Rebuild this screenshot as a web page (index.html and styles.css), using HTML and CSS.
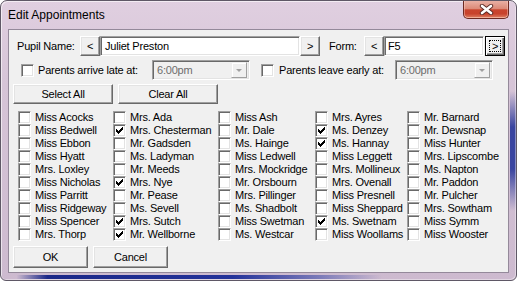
FILE: index.html
```html
<!DOCTYPE html>
<html lang="en">
<head>
  <meta charset="UTF-8">
  <title>Edit Appointments</title>
  <link rel="stylesheet" href="styles.css">
</head>
<body>
  <div class="window">
    <div class="titlebar">
      <span class="title">Edit Appointments</span>
      <span class="close">
        <svg width="15" height="11" viewBox="0 0 15 11">
          <path d="M3 2 L12 9 M12 2 L3 9" stroke="#5a2a24" stroke-width="4.4" stroke-linecap="round"/>
          <path d="M3 2 L12 9 M12 2 L3 9" stroke="#fff" stroke-width="2.6" stroke-linecap="round"/>
        </svg>
      </span>
    </div>

    <div class="client">
      <div class="row pupil">
        <span class="lbl name-lbl">Pupil Name:</span>
        <span class="btn nav">&lt;</span>
        <span class="edit name-edit">Juliet Preston</span>
        <span class="btn nav">&gt;</span>
        <span class="lbl form-lbl">Form:</span>
        <span class="btn nav">&lt;</span>
        <span class="edit form-edit">F5</span>
        <span class="btn nav focused"><span class="focus">&gt;</span></span>
      </div>

      <div class="row times">
        <span class="check"></span>
        <span class="lbl late-lbl">Parents arrive late at:</span>
        <span class="combo"><span class="combo-text">6:00pm</span><span class="drop"><span class="arrow"></span></span></span>
        <span class="check early-check"></span>
        <span class="lbl early-lbl">Parents leave early at:</span>
        <span class="combo"><span class="combo-text">6:00pm</span><span class="drop"><span class="arrow"></span></span></span>
      </div>

      <div class="row actions">
        <span class="btn wide">Select All</span>
        <span class="btn wide">Clear All</span>
      </div>

      <div class="staff">
        <label class="item"><span class="check"></span>Miss Acocks</label>
        <label class="item"><span class="check"></span>Mrs. Ada</label>
        <label class="item"><span class="check"></span>Miss Ash</label>
        <label class="item"><span class="check"></span>Mrs. Ayres</label>
        <label class="item"><span class="check"></span>Mr. Barnard</label>

        <label class="item"><span class="check"></span>Miss Bedwell</label>
        <label class="item"><span class="check"><svg class="tick" width="7" height="7" viewBox="0 0 7 7"><path d="M0 2h1v1h1v1h1v-1h1v-1h1v-1h1v-1h1v3h-1v1h-1v1h-1v1h-1v1h-1v-1h-1v-1h-1z"/></svg></span>Mrs. Chesterman</label>
        <label class="item"><span class="check"></span>Mr. Dale</label>
        <label class="item"><span class="check"><svg class="tick" width="7" height="7" viewBox="0 0 7 7"><path d="M0 2h1v1h1v1h1v-1h1v-1h1v-1h1v-1h1v3h-1v1h-1v1h-1v1h-1v1h-1v-1h-1v-1h-1z"/></svg></span>Ms. Denzey</label>
        <label class="item"><span class="check"></span>Mr. Dewsnap</label>

        <label class="item"><span class="check"></span>Miss Ebbon</label>
        <label class="item"><span class="check"></span>Mr. Gadsden</label>
        <label class="item"><span class="check"></span>Ms. Hainge</label>
        <label class="item"><span class="check"><svg class="tick" width="7" height="7" viewBox="0 0 7 7"><path d="M0 2h1v1h1v1h1v-1h1v-1h1v-1h1v-1h1v3h-1v1h-1v1h-1v1h-1v1h-1v-1h-1v-1h-1z"/></svg></span>Ms. Hannay</label>
        <label class="item"><span class="check"></span>Miss Hunter</label>

        <label class="item"><span class="check"></span>Miss Hyatt</label>
        <label class="item"><span class="check"></span>Ms. Ladyman</label>
        <label class="item"><span class="check"></span>Miss Ledwell</label>
        <label class="item"><span class="check"></span>Miss Leggett</label>
        <label class="item"><span class="check"></span>Mrs. Lipscombe</label>

        <label class="item"><span class="check"></span>Mrs. Loxley</label>
        <label class="item"><span class="check"></span>Mr. Meeds</label>
        <label class="item"><span class="check"></span>Mrs. Mockridge</label>
        <label class="item"><span class="check"></span>Mrs. Mollineux</label>
        <label class="item"><span class="check"></span>Ms. Napton</label>

        <label class="item"><span class="check"></span>Miss Nicholas</label>
        <label class="item"><span class="check"><svg class="tick" width="7" height="7" viewBox="0 0 7 7"><path d="M0 2h1v1h1v1h1v-1h1v-1h1v-1h1v-1h1v3h-1v1h-1v1h-1v1h-1v1h-1v-1h-1v-1h-1z"/></svg></span>Mrs. Nye</label>
        <label class="item"><span class="check"></span>Mr. Orsbourn</label>
        <label class="item"><span class="check"></span>Mrs. Ovenall</label>
        <label class="item"><span class="check"></span>Mr. Paddon</label>

        <label class="item"><span class="check"></span>Miss Parritt</label>
        <label class="item"><span class="check"></span>Mr. Pease</label>
        <label class="item"><span class="check"></span>Mrs. Pillinger</label>
        <label class="item"><span class="check"></span>Miss Presnell</label>
        <label class="item"><span class="check"></span>Mr. Pulcher</label>

        <label class="item"><span class="check"></span>Miss Ridgeway</label>
        <label class="item"><span class="check"></span>Ms. Sevell</label>
        <label class="item"><span class="check"></span>Ms. Shadbolt</label>
        <label class="item"><span class="check"></span>Miss Sheppard</label>
        <label class="item"><span class="check"></span>Mrs. Sowtham</label>

        <label class="item"><span class="check"></span>Miss Spencer</label>
        <label class="item"><span class="check"><svg class="tick" width="7" height="7" viewBox="0 0 7 7"><path d="M0 2h1v1h1v1h1v-1h1v-1h1v-1h1v-1h1v3h-1v1h-1v1h-1v1h-1v1h-1v-1h-1v-1h-1z"/></svg></span>Mrs. Sutch</label>
        <label class="item"><span class="check"></span>Miss Swetman</label>
        <label class="item"><span class="check"><svg class="tick" width="7" height="7" viewBox="0 0 7 7"><path d="M0 2h1v1h1v1h1v-1h1v-1h1v-1h1v-1h1v3h-1v1h-1v1h-1v1h-1v1h-1v-1h-1v-1h-1z"/></svg></span>Ms. Swetnam</label>
        <label class="item"><span class="check"></span>Miss Symm</label>

        <label class="item"><span class="check"></span>Mrs. Thorp</label>
        <label class="item"><span class="check"><svg class="tick" width="7" height="7" viewBox="0 0 7 7"><path d="M0 2h1v1h1v1h1v-1h1v-1h1v-1h1v-1h1v3h-1v1h-1v1h-1v1h-1v1h-1v-1h-1v-1h-1z"/></svg></span>Mr. Wellborne</label>
        <label class="item"><span class="check"></span>Ms. Westcar</label>
        <label class="item"><span class="check"></span>Miss Woollams</label>
        <label class="item"><span class="check"></span>Miss Wooster</label>
      </div>

      <div class="row footer">
        <span class="btn small">OK</span>
        <span class="btn small">Cancel</span>
      </div>
    </div>
  </div>
</body>
</html>
```

FILE: styles.css
```css
body {
  margin: 0;
  font-family: "Liberation Sans", Arial, sans-serif;
  font-size: 11px;
  letter-spacing: -0.2px;
  color: #000;
  background: #fff;
}

/* window frame */
.window {
  width: 517px;
  height: 281px;
  box-sizing: border-box;
  padding: 0 7px 7px;
  border: 1px solid #5f5866;
  border-radius: 7px 7px 6px 6px;
  display: flex;
  flex-direction: column;
  background:
    linear-gradient(to right, rgba(30,40,140,0) 3%, #1b2888 9%, #24329a 45%, rgba(70,80,170,0.6) 62%, rgba(200,180,210,0) 74%) left bottom 1px / 100% 4px no-repeat,
    linear-gradient(rgba(60,70,170,0), #3a45a0 30%, #3a45a0 65%, rgba(60,70,170,0)) right 0 top 90px / 6px 120px no-repeat,
    linear-gradient(#e0cfe0, #d6c4d7 30%, #cdbacf);
  box-shadow: inset 1px 1px rgba(255,255,255,0.6), inset -1px -1px rgba(255,255,255,0.4);
}
.titlebar {
  display: flex;
  height: 28px;
  flex: none;
}
.title {
  font-size: 12px;
  letter-spacing: 0;
  line-height: 15px;
  padding-top: 7px;
}
.close {
  margin-left: auto;
  width: 46px;
  height: 18px;
  box-sizing: border-box;
  display: flex;
  align-items: center;
  justify-content: center;
  border: 1px solid #6d2a22;
  border-top: none;
  border-radius: 0 0 5px 5px;
  background: linear-gradient(#e9b0a4 0%, #dc8a78 45%, #c9452e 52%, #c8432c 75%, #de8064 100%);
  box-shadow: inset 0 -1px rgba(255,210,190,0.6), inset 1px 0 rgba(255,220,210,0.4), inset -1px 0 rgba(255,220,210,0.4);
}

/* client area */
.client {
  flex: 1;
  background: #f0f0f0;
  border: 1px solid #94899a;
  padding-top: 6px;
  display: flex;
  flex-direction: column;
}
.row {
  display: flex;
  align-items: center;
  flex: none;
}
.pupil { height: 20px; padding-left: 8px; }
.times { height: 20px; margin-top: 4px; padding-left: 12px; }
.actions { height: 20px; margin-top: 4px; padding-left: 4px; gap: 5px; }
.footer { height: 22px; margin-top: 5px; padding-left: 4px; gap: 5px; }

.lbl { white-space: nowrap; }
.name-lbl { width: 63px; }
.form-lbl { width: 35px; margin-left: 9px; }
.late-lbl { width: 114px; margin-left: 4px; }
.early-lbl { width: 116px; margin-left: 5px; }
.early-check { margin-left: 11px; }

/* raised buttons */
.btn {
  box-sizing: border-box;
  display: flex;
  align-items: center;
  justify-content: center;
  height: 100%;
  background: #f0f0f0;
  border: 1px solid;
  border-color: #fff #696969 #696969 #fff;
  box-shadow: inset -1px -1px #a0a0a0, inset 1px 1px #e3e3e3;
}
.nav { width: 20px; }
.wide { width: 100px; }
.small { width: 75px; }
.focused {
  margin-left: 1px;
  border-color: #000;
  box-shadow: inset 1px 1px #fff, inset -1px -1px #696969, inset -2px -2px #a0a0a0;
}
.focus {
  width: 12px;
  height: 12px;
  box-sizing: border-box;
  border: 1px dotted #000;
  display: flex;
  align-items: center;
  justify-content: center;
  line-height: 10px;
}

/* sunken fields */
.edit, .combo, .check {
  box-sizing: border-box;
  border: 1px solid;
  border-color: #a0a0a0 #fff #fff #a0a0a0;
  box-shadow: inset 1px 1px #696969, inset -1px -1px #e3e3e3;
}
.edit {
  height: 100%;
  background: #fff;
  padding-left: 4px;
  display: flex;
  align-items: center;
}
.name-edit { width: 200px; }
.form-edit { width: 100px; padding-left: 3px; }

.combo {
  width: 98px;
  height: 100%;
  background: #f0f0f0;
  display: flex;
  align-items: center;
  padding: 2px;
}
.combo-text {
  color: #6d6d6d;
  padding-left: 2px;
}
.drop {
  margin-left: auto;
  width: 16px;
  height: 16px;
  box-sizing: border-box;
  border: 1px solid;
  border-color: #f0f0f0 #a0a0a0 #a0a0a0 #f0f0f0;
  box-shadow: inset 1px 1px #fff;
  display: flex;
  align-items: center;
  justify-content: center;
}
.arrow {
  width: 0;
  height: 0;
  border-left: 3px solid transparent;
  border-right: 3px solid transparent;
  border-top: 3px solid #a0a0a0;
}

/* checkboxes */
.check {
  width: 13px;
  height: 13px;
  flex: none;
  background: #fff;
  padding: 2px;
  display: flex;
}
.tick { display: block; }
.tick path { fill: #000; }

/* staff grid */
.staff {
  margin-top: 7px;
  padding-left: 9px;
  display: grid;
  grid-template-columns: 95px 105px 97px 92px 1fr;
  grid-auto-rows: 13px;
  flex: none;
}
.item {
  display: flex;
  align-items: center;
  line-height: 13px;
  white-space: nowrap;
  gap: 4px;
}
```
